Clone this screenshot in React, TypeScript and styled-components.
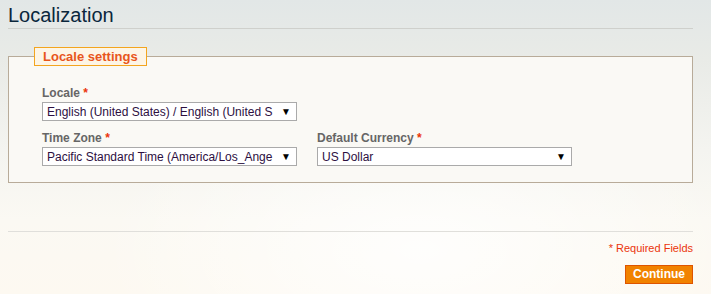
import React from "react";
import styled, { createGlobalStyle } from "styled-components";

const GlobalStyle = createGlobalStyle`
  html, body {
    margin: 0;
    padding: 0;
  }
  body {
    min-height: 294px;
    font-family: Arial, "Liberation Sans", Helvetica, sans-serif;
    background:
      radial-gradient(ellipse 320px 160px at 420px 250px, rgba(255, 255, 255, 0.8), rgba(255, 255, 255, 0)),
      linear-gradient(to bottom, #e2e7e7 0px, #e9ebe7 60px, #f4f4f0 150px, #fbf9f3 220px, #fdf9f1 294px);
  }
`;

const Page = styled.div`
  padding: 0 18px 0 8px;
`;

const Title = styled.h2`
  margin: 0;
  padding: 3px 0 1px;
  font-size: 20px;
  line-height: 24px;
  font-weight: normal;
  color: #0a263c;
  border-bottom: 1px solid #cfd0cc;
`;

const Fieldset = styled.fieldset`
  margin: 18px 0 0;
  padding: 0;
  border: 1px solid #b8ab99;
  background: #faf9f5;
`;

const Legend = styled.legend`
  margin-left: 25px;
  padding: 2px 8px 2px;
  border: 1px solid #f3a51f;
  background: #fdf5e6;
  color: #e8561c;
  font-weight: bold;
  font-size: 13px;
  line-height: 13px;
`;

const Body = styled.div`
  padding: 20px 0 16px 33px;
  display: flex;
  flex-direction: column;
  gap: 10px;
`;

const Row = styled.div`
  display: flex;
  gap: 20px;
`;

const Field = styled.div`
  display: flex;
  flex-direction: column;
  gap: 1px;
  width: 255px;
`;

const Label = styled.label`
  font-size: 12px;
  line-height: 15px;
  font-weight: bold;
  color: #666666;
  em {
    font-style: normal;
    color: #eb340a;
  }
`;

const SelectBox = styled.div`
  box-sizing: border-box;
  height: 19px;
  display: flex;
  align-items: center;
  gap: 6px;
  border: 1px solid #aaaaaa;
  background: #ffffff;
  padding: 0 5px 0 4px;
  font-size: 12px;
  color: #2d0f3f;
`;

const SelectText = styled.span`
  flex: 1;
  min-width: 0;
  overflow: hidden;
  white-space: nowrap;
`;

const Arrow = styled.span`
  font-size: 10px;
  line-height: 12px;
  color: #000;
`;

const Footer = styled.div`
  margin-top: 48px;
  border-top: 1px solid #e0dfdb;
  padding-top: 9px;
  display: flex;
  flex-direction: column;
  align-items: flex-end;
  gap: 10px;
`;

const Required = styled.p`
  margin: 0;
  font-size: 11px;
  line-height: 14px;
  color: #eb340a;
`;

const Button = styled.button`
  box-sizing: border-box;
  height: 19px;
  padding: 0 7px;
  border: 1px solid #de5400;
  background: #f18200;
  color: #ffffff;
  font-family: Arial, "Liberation Sans", sans-serif;
  font-weight: bold;
  font-size: 12px;
  line-height: 15px;
  cursor: pointer;
`;

function Select({ value }: { value: string }) {
  return (
    <SelectBox>
      <SelectText>{value}</SelectText>
      <Arrow>▼</Arrow>
    </SelectBox>
  );
}

export default function App() {
  return (
    <Page>
      <GlobalStyle />
      <Title>Localization</Title>
      <Fieldset>
        <Legend>Locale settings</Legend>
        <Body>
          <Field>
            <Label>
              Locale <em>*</em>
            </Label>
            <Select value="English (United States) / English (United S" />
          </Field>
          <Row>
            <Field>
              <Label>
                Time Zone <em>*</em>
              </Label>
              <Select value="Pacific Standard Time (America/Los_Ange" />
            </Field>
            <Field>
              <Label>
                Default Currency <em>*</em>
              </Label>
              <Select value="US Dollar" />
            </Field>
          </Row>
        </Body>
      </Fieldset>
      <Footer>
        <Required>* Required Fields</Required>
        <Button>Continue</Button>
      </Footer>
    </Page>
  );
}
